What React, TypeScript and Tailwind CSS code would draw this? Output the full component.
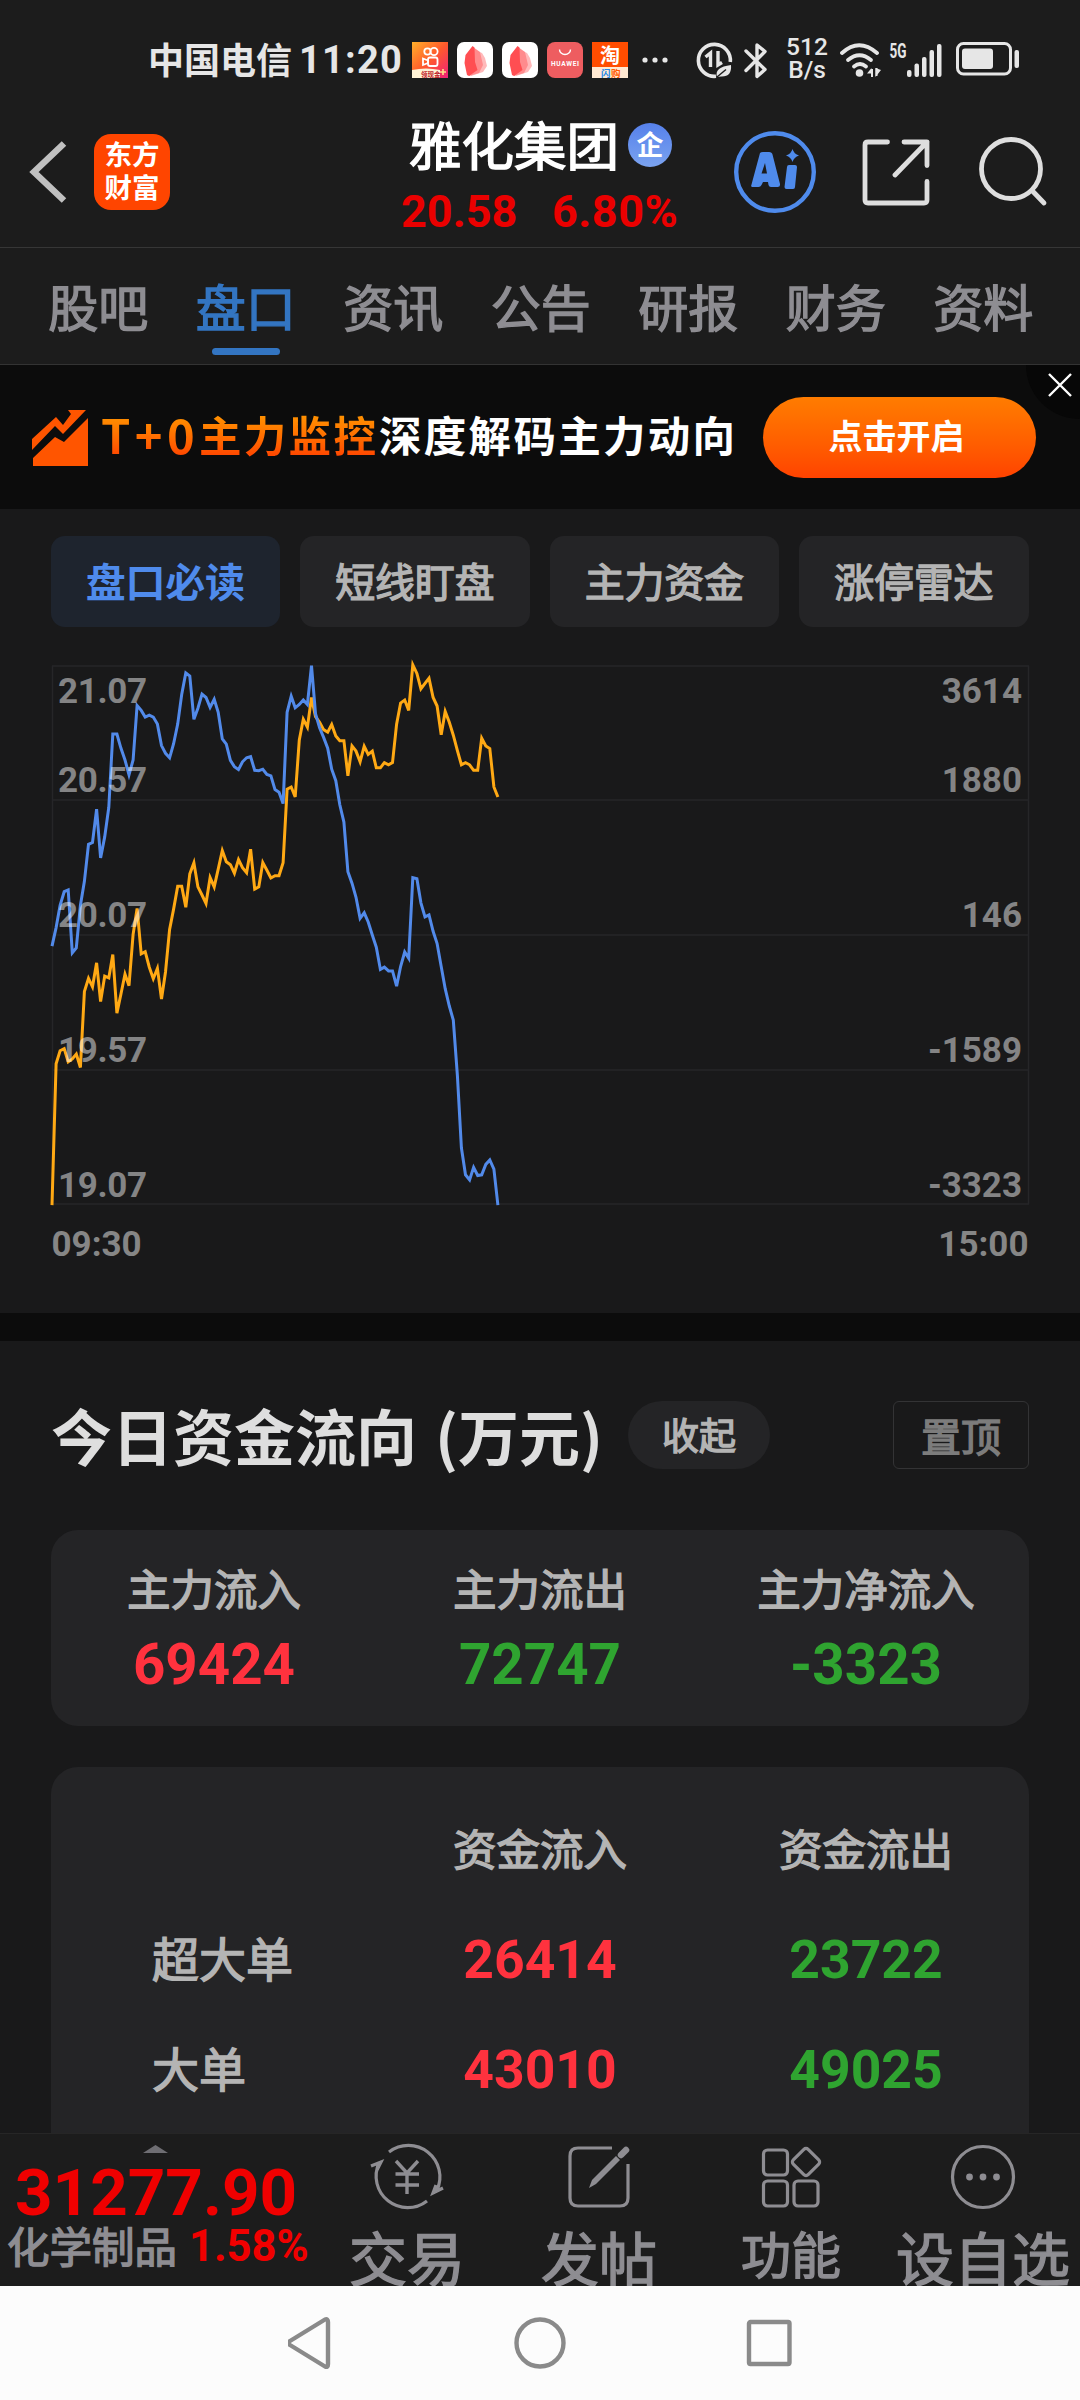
import type { ReactNode } from "react";
import { clsx } from "clsx";

const NUM = "font-['Roboto','Noto_Sans_CJK_SC',sans-serif]";
// The CJK family has no medium cut, a hairline stroke gives the weight between regular and bold
const MEDIUM = "[-webkit-text-stroke:1.4px_currentColor]";

const SCALE_TOP = 43;
const SCALE_BOTTOM = 1497;
const MINUTES = 241;
const PLOT_W = 977;
const PLOT_H = 538;

const FLOW = [
  800, 750, 690, 653, 648, 818, 805, 690, 625, 525, 520, 430, 562, 505, 425, 227, 227, 265, 297, 337,
  297, 150, 163, 181, 176, 181, 200, 258, 279, 291, 253, 200, 120, 62, 70, 187, 157, 119, 128, 155,
  133, 168, 240, 254, 298, 315, 323, 302, 291, 288, 325, 326, 322, 336, 340, 377, 384, 415, 168, 125,
  156, 147, 135, 147, 42, 172, 210, 236, 265, 322, 353, 418, 465, 599, 630, 668, 725, 710, 735, 770,
  803, 863, 857, 867, 867, 908, 855, 816, 833, 615, 618, 683, 721, 716, 760, 793, 855, 915, 962, 1000,
  1150, 1345, 1418, 1432, 1398, 1420, 1418, 1390, 1378, 1403, 1500,
];

const PRICE = [
  1500, 1118, 1083, 1077, 1113, 1105, 1092, 1128, 923, 887, 910, 845, 950, 881, 886, 823, 981, 930, 876, 907,
  768, 698, 821, 815, 857, 888, 860, 943, 870, 755, 700, 638, 638, 695, 605, 575, 640, 662, 685, 615,
  640, 592, 542, 572, 580, 603, 566, 588, 602, 538, 646, 640, 574, 595, 616, 610, 610, 575, 376, 370,
  397, 243, 187, 208, 128, 180, 195, 215, 222, 201, 232, 245, 245, 340, 259, 273, 302, 260, 282, 273,
  318, 318, 304, 310, 304, 200, 143, 135, 163, 40, 63, 105, 90, 76, 128, 151, 229, 166, 195, 230,
  272, 310, 304, 310, 325, 325, 238, 259, 266, 370, 397,
];

const AXIS = [
  { price: "21.07", flow: "3614", line: 0, base: 36.5 },
  { price: "20.57", flow: "1880", line: 134, base: 126 },
  { price: "20.07", flow: "146", line: 269, base: 261 },
  { price: "19.57", flow: "-1589", line: 404, base: 396 },
  { price: "19.07", flow: "-3323", line: 538, base: 531 },
];

const TABS = ["股吧", "盘口", "资讯", "公告", "研报", "财务", "资料"];
const PILLS = ["盘口必读", "短线盯盘", "主力资金", "涨停雷达"];

const SUMMARY = [
  { label: "主力流入", value: "69424", up: true },
  { label: "主力流出", value: "72747", up: false },
  { label: "主力净流入", value: "-3323", up: false },
];

const ORDERS = [
  { label: "超大单", inflow: "26414", outflow: "23722" },
  { label: "大单", inflow: "43010", outflow: "49025" },
];

function toPoints(samples: number[]): string {
  return samples
    .map((v, i) => {
      const x = (i * PLOT_W) / MINUTES;
      const y = ((v - SCALE_TOP) / (SCALE_BOTTOM - SCALE_TOP)) * PLOT_H;
      return `${x.toFixed(1)},${y.toFixed(1)}`;
    })
    .join(" ");
}

function LeafApp() {
  return (
    <svg className="w-9 h-9" viewBox="0 0 36 36">
      <rect width="36" height="36" rx="7" fill="#fff" />
      <path d="M18 8l7 3 3 5 2 8-4 6-12 4z" fill="#ffb9ba" />
      <path d="M16 5l7 5 3 13-4 8-10 3z" fill="#ff8b8d" />
      <path d="M15.500 4l2 1.500L18 20l2.500 8-8.500 6-2-1-2.500-12 1-8z" fill="#ff4e52" />
    </svg>
  );
}

function StatusBar() {
  return (
    <div className="h-[110px] pl-[148px] pt-[10px] flex items-center text-[#e6e6e6]">
      <span className="text-[36px] font-bold leading-none w-[151px] -mt-1 whitespace-nowrap">中国电信</span>
      <span className={clsx(NUM, "text-[38px] font-bold leading-none w-[113px] tracking-[1.2px]")}>11:20</span>
      <div className="flex gap-[9px]">
        <svg className="w-9 h-9" viewBox="0 0 36 36">
          <defs>
            <linearGradient id="ks" x1="0" y1="0" x2="1" y2="1">
              <stop offset="0" stopColor="#ffb02a" />
              <stop offset="0.5" stopColor="#ff5a2c" />
              <stop offset="1" stopColor="#f0207a" />
            </linearGradient>
          </defs>
          <rect width="36" height="36" fill="url(#ks)" />
          <g fill="none" stroke="#fff" strokeWidth="1.800">
            <circle cx="15.500" cy="9.500" r="3.200" />
            <circle cx="22" cy="9.500" r="3.600" />
            <rect x="16" y="15.500" width="9.500" height="8.500" rx="2" />
            <path d="M16 18.500l-5-2v6.500l5-2z" />
          </g>
          <path d="M0 28q14-3 28 0v8H0z" fill="#fff3d6" />
          <text x="9" y="34.500" fontSize="6.500" fontWeight="700" fill="#c0222a">领现金</text>
          <path d="M31 27v6M28 30h6" stroke="#ffe08a" strokeWidth="1.600" />
        </svg>
        <LeafApp />
        <LeafApp />
        <svg className="w-9 h-9" viewBox="0 0 36 36">
          <rect width="36" height="36" rx="8" fill="#ee5d60" />
          <path d="M12.500 7.500a5.500 5 0 0 0 11 0" fill="none" stroke="#fff" strokeWidth="1.400" />
          <text x="18" y="24" fontSize="6.600" fontWeight="700" textAnchor="middle" fill="#fff" textLength="28" className="font-['Roboto']">HUAWEI</text>
        </svg>
        <svg className="w-9 h-9" viewBox="0 0 36 36">
          <rect width="36" height="36" fill="#ff4d00" />
          <rect y="25" width="36" height="11" fill="#ffe9d2" />
          <text x="18" y="21" fontSize="20" fontWeight="700" textAnchor="middle" fill="#fff">淘</text>
          <text x="9" y="34.500" fontSize="9.500" fontWeight="700" fill="#2487e8">闪</text>
          <text x="19" y="34.500" fontSize="9.500" fontWeight="700" fill="#ff5a00">购</text>
        </svg>
      </div>
      <svg className="w-[26px] h-2 ml-[14px]" viewBox="0 0 26 8" fill="#e6e6e6">
        <circle cx="3" cy="4" r="2.600" />
        <circle cx="13" cy="4" r="2.600" />
        <circle cx="23" cy="4" r="2.600" />
      </svg>
      <svg className="w-[37px] h-[37px] ml-[28px]" viewBox="0 0 37 37" fill="none" stroke="#e6e6e6">
        <path d="M20 34.300A16 16 0 1 1 34.300 20" strokeWidth="3.600" />
        <path d="M9.500 15l5-4v14M22 9v14l4-2.500" strokeWidth="3.400" />
        <path d="M21 35q-3-10 14-12 1 12-10 11.500z" fill="#e6e6e6" stroke="none" />
        <path d="M21 35l9-7.500" stroke="#1c1c1c" strokeWidth="1.400" />
      </svg>
      <svg className="w-6 h-[37px] ml-[11px]" viewBox="0 0 24 37" fill="none" stroke="#e6e6e6" strokeWidth="3.400" strokeLinecap="round" strokeLinejoin="round">
        <path d="M2 9l19 18.500-8 7V3l8 6.500L2 28.500" />
      </svg>
      <div className={clsx(NUM, "ml-[18px] -mt-1 w-[42px] text-[24.500px] leading-[23px] text-center font-medium")}>
        <div>512</div>
        <div>B/s</div>
      </div>
      <svg className="w-[42px] h-9 ml-[12px]" viewBox="0 0 42 36" fill="none" stroke="#e6e6e6">
        <path d="M2 11q17-15.500 35 0" strokeWidth="3.800" strokeLinecap="round" />
        <path d="M8 18q11.500-9.500 23 0" strokeWidth="3.800" strokeLinecap="round" />
        <path d="M14 24.500q6-5 12 0" strokeWidth="3.800" strokeLinecap="round" />
        <circle cx="19.500" cy="31" r="3.800" fill="#e6e6e6" stroke="none" />
        <path d="M27 31.500h4.500V26zM35.500 26v9l5.500-7z" fill="#e6e6e6" stroke="none" />
        <path d="M32 27v8M36.500 26v8" strokeWidth="2" />
      </svg>
      <svg className="w-[55px] h-9 ml-[7px]" viewBox="0 0 55 36" fill="#e6e6e6">
        <text x="0.500" y="16" fontSize="20" fontWeight="700" textLength="17" lengthAdjust="spacingAndGlyphs" className="font-['Roboto']">5G</text>
        <rect x="18" y="28" width="4.500" height="7" rx="2" />
        <rect x="25.500" y="21.500" width="4.500" height="13.500" rx="2" />
        <rect x="33" y="15" width="4.500" height="20" rx="2" />
        <rect x="40.500" y="8" width="4.500" height="27" rx="2" />
        <rect x="48" y="2" width="4.500" height="33" rx="2" />
      </svg>
      <svg className="w-16 h-9 ml-[12px]" viewBox="0 0 64 36">
        <rect x="1.500" y="1.500" width="53" height="30.500" rx="6" fill="none" stroke="#e6e6e6" strokeWidth="3" />
        <rect x="6" y="6.500" width="31" height="20.500" rx="3" fill="#e6e6e6" />
        <rect x="58.500" y="8" width="4.500" height="18" rx="2" fill="#e6e6e6" />
      </svg>
    </div>
  );
}

function Header() {
  return (
    <div className="h-[138px] border-b border-[#363636] flex">
      <svg className="w-10 h-[66px] ml-[28px] mt-[29px]" viewBox="0 0 40 66" fill="none" stroke="#c0c0c0" strokeWidth="6.500">
        <path d="M36 4.500L6 33l30 28.500" />
      </svg>
      <div className="w-[76px] h-[76px] ml-[26px] mt-[24px] rounded-[17px] bg-[#ff4500] text-white text-[27.500px] leading-[33px] font-bold pt-[3px] text-center">
        <div>东方</div>
        <div>财富</div>
      </div>
      <div className="w-[290px] ml-[225px]">
        <div className="h-[70px] pl-[14px] flex items-center">
          <span className={clsx(MEDIUM, "text-[52.500px] text-white leading-none -mt-1 whitespace-nowrap")}>雅化集团</span>
          <span className="ml-[9px] w-11 h-11 rounded-full bg-linear-to-b from-[#5680ea] to-[#7ba3f0] text-white text-[27px] font-bold leading-[42px] text-center">
            企
          </span>
        </div>
        <div className={clsx(NUM, "h-[62px] pl-[6px] flex items-center text-[45px] leading-none font-bold text-[#ea0000]")}>
          <span className="w-[151px]">20.58</span>
          <span className="tracking-[0.5px]">6.80%</span>
        </div>
      </div>
      <svg className="w-[82px] h-[84px] ml-[49px] mt-[20px]" viewBox="0 0 82 84">
        <circle cx="41" cy="42" r="38.800" fill="none" stroke="#4f8bec" strokeWidth="4.400" />
        <path
          d="M26 23q1-1 3-1h6q3 0 3.500 2.500L46 54q.5 3-2.500 3H37q-2 0-2.500-2l-.5-3h-5l-1.500 3q-1 2-3 2h-6q-2 0-1-2.500zM31 33l-3.500 10.500h5.500z"
          fill="#4f8bec"
          fillRule="evenodd"
        />
        <path d="M53 37q0-2 2-2h6q2 0 2 2l-2 20q0 2-2 2h-6.500q-2 0-2-2z" fill="#4f8bec" />
        <path d="M58.500 19q1.500 5 6.500 6.500-5 1.500-6.500 6.500-1.500-5-6.500-6.500 5-1.500 6.500-6.500z" fill="#4f8bec" />
      </svg>
      <svg className="w-[68px] h-[68px] ml-[46px] mt-[28px]" viewBox="0 0 68 68" fill="none" stroke="#dedede" strokeWidth="4.800" strokeLinecap="round" strokeLinejoin="round">
        <path d="M25.500 4H6q-3 0-3 3v55q0 3 3 3h56q3 0 3-3V43.500" />
        <path d="M42 4h23v23.500M65 4L33 37" />
      </svg>
      <svg className="w-[70px] h-[72px] ml-[48px] mt-[26px]" viewBox="0 0 70 72" fill="none" stroke="#dedede" strokeWidth="4.800" strokeLinecap="round">
        <circle cx="33" cy="33" r="29.500" />
        <path d="M54 54.500L66 67" />
      </svg>
    </div>
  );
}

function Tabs() {
  return (
    <div className="h-[117px] border-b border-[#333] grid grid-cols-[repeat(7,147.5px)] pl-[24.5px]">
      {TABS.map((tab, i) => (
        <div key={tab} className="flex flex-col items-center">
          <span
            className={clsx(
              MEDIUM,
              "h-[100px] pt-[32px] text-[50px] leading-none",
              i === 1 ? "text-[#3375c2]" : "text-[#8e8d92]"
            )}
          >
            {tab}
          </span>
          {i === 1 && <span className="w-[68px] h-[7px] rounded-full bg-[#3375c2]" />}
        </div>
      ))}
    </div>
  );
}

function Banner() {
  return (
    <div className="relative h-36 bg-[#0c0c0c] flex items-center overflow-hidden">
      <svg className="w-[58px] h-[58px] ml-[31px] -mt-px" viewBox="0 0 58 58" fill="#ff5500">
        <path d="M1 31L25 9l7 8L40 6l-3-4h18L32 26l-8-8L1 42z" />
        <path d="M2 50l22-21 9 5 24-24v48H2z" />
      </svg>
      <span className="ml-[12px] -mt-1.5 flex text-[42.500px] tracking-[2.300px] leading-[60px] font-bold whitespace-nowrap">
        <span className="flex w-[278px] bg-linear-to-b from-[#ff9000] from-20% to-[#ff4800] to-85% bg-clip-text text-transparent">
          <span className="w-[98px] text-[47px] tracking-[4.500px]">T+0</span>
          <span>主力监控</span>
        </span>
        <span className="text-white">深度解码主力动向</span>
      </span>
      <div className="absolute -right-[54px] -top-[54px] w-[108px] h-[108px] rounded-full bg-[#070707]" />
      <button className="absolute left-[763px] top-[32px] w-[273px] h-[81px] rounded-full bg-linear-to-b from-[#ff7c00] to-[#ff4200] text-white text-[34px] leading-[75px] font-bold pr-1.5 pb-1.5">
        点击开启
      </button>
      <svg className="absolute right-[8px] top-[8px] w-6 h-6" viewBox="0 0 24 24" stroke="#fff" strokeWidth="2.400">
        <path d="M1 1l22 22M23 1L1 23" />
      </svg>
    </div>
  );
}

function Pills() {
  return (
    <div className="grid grid-cols-4 gap-5 pl-[50.5px] pr-[51.5px] pt-[27px]">
      {PILLS.map((pill, i) => (
        <div
          key={pill}
          className={clsx(
            "h-[91px] rounded-[14px] text-center text-[40px] leading-[89px] -tracking-[0.2px]",
            i === 0 ? "bg-[#1e242e] text-[#4f8bec] font-bold" : "bg-[#242426] text-[#b4b4b4]",
            i !== 0 && MEDIUM
          )}
        >
          {pill}
        </div>
      ))}
    </div>
  );
}

function FlowChart() {
  return (
    <div className="mt-[39px] px-[51.5px]">
      <svg className="block w-[977px] h-[538px] overflow-visible" viewBox="0 0 977 538">
        <g stroke="#262628" strokeWidth="1.500" fill="none">
          <path d="M0.500 0V538M976.500 0V538" />
          {AXIS.map((row) => (
            <path key={row.line} d={`M0 ${row.line}H977`} />
          ))}
        </g>
        <polyline points={toPoints(PRICE)} fill="none" stroke="#ffa914" strokeWidth="3" />
        <polyline points={toPoints(FLOW)} fill="none" stroke="#528aea" strokeWidth="3" />
        <g fill="#fff" fillOpacity="0.47" fontSize="35" className="font-['Roboto'] font-bold">
          {AXIS.map((row) => (
            <g key={row.price}>
              <text x="6" y={row.base} textLength="89">{row.price}</text>
              <text x="970" y={row.base} textAnchor="end">{row.flow}</text>
            </g>
          ))}
        </g>
      </svg>
      <div className={clsx(NUM, "mt-[22px] h-[36px] flex justify-between text-[35px] leading-[38px] font-bold text-[#868686]")}>
        <span>09:30</span>
        <span>15:00</span>
      </div>
    </div>
  );
}

function FundFlow() {
  return (
    <div className="px-[51px]">
      <div className="h-[189px] pt-[60px] flex">
        <h2 className="text-[61px] leading-[71px] -mt-0.5 font-bold text-[#dedede] whitespace-nowrap">
          今日资金流向<span className="ml-[18px]">(万元)</span>
        </h2>
        <span className={clsx(MEDIUM, "ml-auto w-[142px] h-[68px] rounded-full bg-[#242426] text-center text-[37px] leading-[66px] text-[#b4b4b4]")}>
          收起
        </span>
        <span className={clsx(MEDIUM, "ml-[123px] w-[136px] h-[68px] rounded-[6px] border border-[#333335] text-center text-[40px] leading-[66px] text-[#7c7c7c]")}>
          置顶
        </span>
      </div>
      <div className="h-[196px] rounded-[27px] bg-[#242426] grid grid-cols-3 pt-[27px]">
        {SUMMARY.map((item) => (
          <div key={item.label} className="text-center">
            <div className={clsx(MEDIUM, "h-[66px] text-[43.500px] leading-[61px] text-[#b4b4b4]")}>{item.label}</div>
            <div className={clsx(NUM, "text-[56.500px] leading-[85px] font-bold", item.up ? "text-[#ff323e]" : "text-[#2fa430]")}>
              {item.value}
            </div>
          </div>
        ))}
      </div>
      <div className="mt-[41px] rounded-t-[27px] bg-[#242426] pt-[29px] pb-10">
        <div className={clsx(MEDIUM, "grid grid-cols-3 h-[109px] text-center text-[43.500px] leading-[103px] text-[#b4b4b4]")}>
          <span />
          <span>资金流入</span>
          <span>资金流出</span>
        </div>
        {ORDERS.map((row) => (
          <div key={row.label} className="grid grid-cols-3 h-[110px] text-center">
            <span className={clsx(MEDIUM, "pl-[101px] text-left text-[47px] leading-[103px] text-[#b4b4b4]")}>{row.label}</span>
            <span className={clsx(NUM, "text-[53.500px] leading-[109px] font-bold text-[#ff323e]")}>{row.inflow}</span>
            <span className={clsx(NUM, "text-[53.500px] leading-[109px] font-bold text-[#2fa430]")}>{row.outflow}</span>
          </div>
        ))}
      </div>
    </div>
  );
}

interface ActionProps {
  label: string;
  small?: boolean;
  children: ReactNode;
}

function Action({ label, small, children }: ActionProps) {
  return (
    <div className="w-48 shrink-0 flex flex-col items-center">
      <svg className="w-[76px] h-[76px] mt-[5px] shrink-0" viewBox="0 0 76 76" fill="none" stroke="#8e8d92" strokeWidth="3.200">
        {children}
      </svg>
      <span
        className={clsx(
          MEDIUM,
          "mt-[12px] leading-none whitespace-nowrap",
          small ? "text-[50px]" : "text-[58px]"
        )}
      >
        {label}
      </span>
    </div>
  );
}

function BottomBar() {
  return (
    <div className="h-[153px] shrink-0 bg-[#1c1c1c] border-t border-[#262626] flex overflow-hidden text-[#8e8d92]">
      <div className="w-[311px] shrink-0">
        <div className="mt-[11px] ml-[143px] w-[25px] h-[8px] bg-[#6f6e73] [clip-path:polygon(50%_0,100%_100%,0_100%)]" />
        <div className={clsx(NUM, "h-[74px] pl-[15px] text-[65.500px] leading-[79px] font-bold text-[#f00000]")}>31277.90</div>
        <div className="h-[40px] pl-[7px] flex text-[42.500px] leading-[36px] whitespace-nowrap">
          <span className={MEDIUM}>化学制品</span>
          <span className={clsx(NUM, "ml-[12px] mt-[2px] text-[43.500px] font-bold text-[#f00000]")}>1.58%</span>
        </div>
      </div>
      <Action label="交易">
        <path d="M20 13A31.500 31.500 0 0 1 68 51l-1 2M67 46l-3 8 10-5" />
        <path d="M58 62A31.500 31.500 0 0 1 10 24M2 27l10-4-4 8" />
        <path d="M27 22l11 12 11-12M38 34v21M26.500 35h23.500M26.500 46h23.500" strokeWidth="3.400" />
      </Action>
      <Action label="发帖">
        <path d="M51 9H17q-8 0-8 8v42q0 8 8 8h42q8 0 8-8V25" />
        <path d="M28 49l3-8 24-24 4 4-24 24z" fill="#8e8d92" stroke="none" />
        <path d="M60 16l5-5" strokeWidth="6.500" strokeLinecap="round" />
      </Action>
      <Action label="功能" small>
        <rect x="10.500" y="11" width="24" height="25" rx="4" />
        <rect x="10.500" y="42" width="24" height="25" rx="4" />
        <rect x="41" y="42" width="24" height="25" rx="4" />
        <rect x="42.500" y="12.500" width="21" height="21" rx="3" transform="rotate(45 53 23)" />
      </Action>
      <Action label="设自选">
        <circle cx="38" cy="38" r="30.500" />
        <g fill="#8e8d92" stroke="none">
          <circle cx="24.500" cy="38" r="3.400" />
          <circle cx="38" cy="38" r="3.400" />
          <circle cx="51.500" cy="38" r="3.400" />
        </g>
      </Action>
    </div>
  );
}

function NavBar() {
  return (
    <div className="h-[114px] shrink-0 bg-[#fcfcfc] flex items-center justify-center">
      <svg className="w-[504px] h-[52px]" viewBox="0 0 504 52" fill="none" stroke="#8a8a8a" strokeWidth="4.400" strokeLinejoin="round">
        <path d="M37 2.500Q40 1.500 40 5v42q0 4-3 2.500L2 28q-3-2 0-4z" />
        <circle cx="252" cy="26" r="23.500" />
        <rect x="461" y="5" width="40.500" height="42" rx="1.500" />
      </svg>
    </div>
  );
}

export default function App() {
  return (
    <div className="w-[1080px] h-[2400px] flex flex-col overflow-hidden bg-[#19191a] font-['Noto_Sans_CJK_SC',sans-serif]">
      <div className="bg-[#1c1c1c]">
        <StatusBar />
        <Header />
        <Tabs />
      </div>
      <div className="h-[1768px] shrink-0 overflow-hidden">
        <Banner />
        <Pills />
        <FlowChart />
        <div className="mt-[51px] h-[28px] bg-[#0c0c0c]" />
        <FundFlow />
      </div>
      <BottomBar />
      <NavBar />
    </div>
  );
}
